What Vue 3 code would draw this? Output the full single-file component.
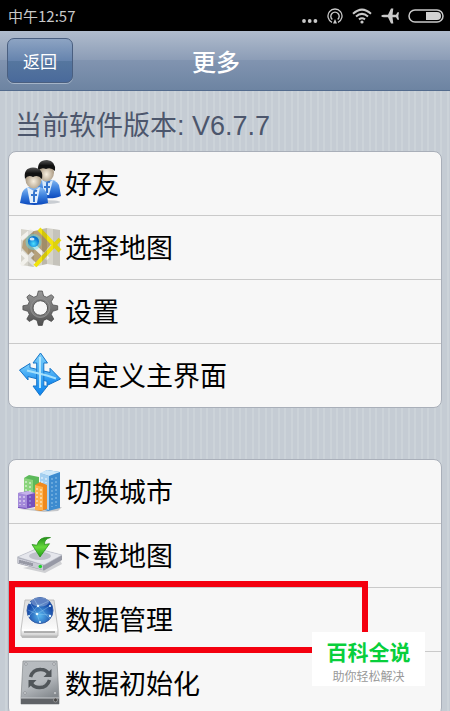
<template>
  <div class="screen">
    <div class="status-bar">
      <span>中午12:57</span>
      <div class="status-icons">
        <svg width="16" height="16" viewBox="0 0 16 16" fill="#c9c9c9">
          <circle cx="2" cy="13" r="1.900" />
          <circle cx="7.700" cy="13" r="1.900" />
          <circle cx="13.400" cy="13" r="1.900" />
        </svg>
        <svg width="16" height="16" viewBox="0 0 16 16" fill="none" stroke="#c9c9c9">
          <path d="M5 14.300A7 7 0 1 1 11 14.300" stroke-width="1.300" />
          <path d="M5.300 11.500A4.200 4.200 0 1 1 10.700 11.500" stroke-width="1.400" />
          <path d="M8 11l2 4.500H6z" fill="#c9c9c9" stroke="none" />
        </svg>
        <svg width="20" height="16" viewBox="0 0 20 16" fill="none" stroke="#c9c9c9" stroke-width="2">
          <path d="M1 5.800Q10-2.600 19 5.800" />
          <path d="M4 8.600Q10 3.200 16 8.600" />
          <path d="M7 11.400Q10 9 13 11.400" />
          <circle cx="10" cy="14" r="1.600" fill="#c9c9c9" stroke="none" />
        </svg>
        <svg width="18" height="16" viewBox="0 0 18 16" fill="#c9c9c9">
          <path d="M0 8Q1 6.700 3 6.700H7L10 .5h2.300L11.500 6.700h3.500l1.500-2.500H18L17.300 8l.7 3.800h-1.500L15 9.300h-3.500l.8 6.200H10L7 9.300H3Q1 9.300 0 8z" />
        </svg>
        <svg width="36" height="16" viewBox="0 0 36 16">
          <rect x="1" y="2" width="34" height="12" rx="6" fill="#000" stroke="#c9c9c9" stroke-width="1.500" />
          <path d="M18 4h11a4 4 0 0 1 0 8H18z" fill="#d2d2d2" />
        </svg>
      </div>
    </div>

    <header class="nav-bar">
      <button type="button" class="back-btn">返回</button>
      <h1 class="nav-title">更多</h1>
      <span></span>
    </header>

    <main class="content">
      <p class="version">当前软件版本: V6.7.7</p>

      <ul v-for="(group, index) in groups" :key="index" class="card">
        <li v-for="item in group" :key="item.icon" class="card-item">
          <button type="button" class="row">
            <svg class="row-icon" viewBox="0 0 44 48" aria-hidden="true">
              <g v-if="item.icon === 'friends'">
                <ellipse cx="24" cy="42" rx="18" ry="2" fill="#c9cdd2" />
                <path d="M19 37V26Q21 20 28 19Q38 19 41 25L43 36Q35 40 19 37z" fill="url(#suit)" />
                <path d="M24 20l5 3 6-3-4 15h-5z" fill="#d8e9fa" />
                <path d="M32 22q-3-1-3 2v9M26 27h6" class="badge-mark" />
                <ellipse cx="28.500" cy="12.500" rx="7.500" ry="9" fill="url(#skin)" />
                <path d="M20 11Q19 0 29 0Q38 1 37 11Q33 7 28 9Q23 7 20 11z" fill="url(#hair)" />
                <path d="M2 43L4 33Q6 28 11 27H21Q27 28 29 34L30 43Q17 47 2 43z" fill="url(#suit)" />
                <path d="M9 27l7 4 6-4-3 16h-7z" fill="#e3effb" />
                <path d="M19 31q-3-1-3 2v9M13 35h6" class="badge-mark" />
                <ellipse cx="15.500" cy="19.500" rx="8" ry="9" fill="url(#skin)" />
                <path d="M7 19Q5 8 15 7.500Q26 8 24 19Q20 14 15 17Q10 14 7 19z" fill="url(#hair)" />
              </g>

              <g v-else-if="item.icon === 'map'">
                <path d="M3 5l13 2 13-3 13 2v36l-13-2-13 3-13-2z" fill="#d6d4cb" />
                <path d="M5 17L16 7l7-1 10 14-15 19L4 24z" fill="#b5a07b" />
                <path d="M3 15L14 6M3 28l15 14M3 41l12-12M13 19l17 16" stroke="#f2f1ec" stroke-width="4" />
                <path d="M21 5L42 27M17 42L42 15" stroke="#f1e30c" stroke-width="4" />
                <path d="M16 7v36l-6-1V6zM42 6v36l-7-1V5z" fill="#000" opacity=".08" />
                <path d="M29 4v36l-5 1V5z" fill="#473815" opacity=".18" />
                <circle cx="15.500" cy="18" r="8" fill="#5bdcf5" opacity=".45" />
                <circle cx="15.500" cy="17.500" r="5.500" fill="url(#marker)" />
                <ellipse cx="14" cy="15" rx="2.500" ry="1.500" fill="#fff" opacity=".8" />
              </g>

              <g v-else-if="item.icon === 'settings'" stroke="#444" stroke-width=".7">
                <path
                  d="M20.300 3h4l1.300 5 3.200 1.200 4.600-2.500 2.400 2.400-2.500 4.600 1.400 3.200 5 .9v4l-5 1.500-1.400 3.200 2.500 4.600-2.400 2.400-4.600-2.500-3.200 1.400-1.300 5h-4l-1.300-5-3.200-1.400-4.600 2.500-2.400-2.400 2.500-4.600-1.400-3.200-5-1.500v-4l5-.9 1.400-3.200-2.500-4.600 2.400-2.400 4.600 2.500 3.200-1.200z"
                  fill="url(#steel)"
                />
                <circle cx="22.300" cy="20" r="9.500" fill="#7d7d7d" stroke="#999" />
                <circle cx="22.300" cy="20" r="7.300" fill="#f7f7f7" stroke="#555" stroke-width="1" />
              </g>

              <g v-else-if="item.icon === 'arrows'" stroke="#1675c9" stroke-linejoin="round">
                <path d="M1.500 18L12 11.500v4.200l20 4.800v-4.200L42.500 27 29 33.500v-4.200L10 24.600V28z" fill="url(#azure)" />
                <path d="M22.500 1L29.500 11H25.800V34H29.500L22 43.500 15 34h3.700V11H15z" fill="url(#azure)" />
                <path d="M9 18.500L29 23.500l9 3" fill="none" stroke="#a5e0fc" stroke-width="2" />
                <path d="M22 5v31" stroke="#b3e6fd" stroke-width="2" />
              </g>

              <g v-else-if="item.icon === 'city'">
                <path d="M2 41l42-2-4 4-14 1z" fill="#c4c6c9" />
                <path d="M6 10l5-3 10 2v30H6z" fill="#5cb95a" />
                <path d="M6 10l9 2v26H6z" fill="#8bd47c" />
                <path d="M22 6l7-4 13 2v36l-12 3-8-3z" fill="#3d8bcf" />
                <path d="M22 5l9 3v34l-9-2z" fill="#a4d0f1" />
                <path d="M22 5l7-3 13 2-11 4z" fill="#d0e9fa" />
                <path d="M0 25l10-2 7 2v14l-10 2-7-1z" fill="#7652bc" />
                <path d="M0 25l9 1v14l-9-1z" fill="#a48ada" />
                <path d="M0 25l10-2 7 2-8 2z" fill="#c4b2ea" />
                <path d="M17 17l5-3 7 3v24l-6 2-6-1z" fill="#f08a1e" />
                <path d="M17 17l8 2v23h-8z" fill="#ffb34d" />
                <path d="M8 13v12M12 14v10M2 28v9M6 28v9M19 20v20M23 21v19M24 9v6M28 10v5" stroke="#fff" stroke-width="1.500" stroke-dasharray="2 2" opacity=".6" />
                <path d="M34 10v29M38 9v29M12 28v10" stroke="#b8dcf5" stroke-dasharray="2 2" opacity=".7" />
              </g>

              <g v-else-if="item.icon === 'download'">
                <path d="M5 36l22 5 17-9-2-4z" fill="#cfd0d3" />
                <path d="M-.5 25L19 16.500 44 23v5L26 38.500-.5 31.500z" fill="#9799a5" />
                <path d="M-.5 25L19 16.500 44 23 26 33z" fill="#e5e6ec" stroke="#babdc7" stroke-width=".6" />
                <path d="M0 26l25 7v5L0 31z" fill="#c9cad4" />
                <path d="M2 28v3M4 28.500v3M6 29v3M8 29.500v3M10 30v3M12 30.500v3M14 31v3" stroke="#676977" />
                <ellipse cx="22" cy="24" rx="11" ry="4" fill="#bec0ca" />
                <path d="M22 25L14 12.500l5 .7Q21 4 32.500 5.500 26 7 26.500 12.500l5-.8z" fill="url(#leaf)" stroke="#218b14" stroke-width=".7" />
                <circle cx="22.300" cy="34.500" r="1.800" fill="#1ed52a" />
              </g>

              <g v-else-if="item.icon === 'globe'">
                <path d="M3 39h37l-1 3H4z" fill="#bbb" />
                <path d="M7 4h29l4 30v6H3v-6z" fill="url(#drive)" stroke="#b6b6b6" stroke-width=".8" />
                <path d="M4 34h35" stroke="#fff" stroke-width="2" />
                <path d="M6 36h31" stroke="#777" />
                <circle cx="22" cy="14.500" r="13" fill="url(#ocean)" stroke="#335da7" />
                <path d="M10 14l9 4 13-8M12 7l7 11 3 9M16 3l4 7 12 13M31 5L20 10 11 20M19 18l13 1" fill="none" stroke="#a4dafa" stroke-width=".5" opacity=".7" />
                <g fill="#e8faff">
                  <circle cx="12" cy="7" r="1" />
                  <circle cx="20" cy="10" r="1.200" />
                  <circle cx="32" cy="10" r="1" />
                  <circle cx="19" cy="18" r="1.300" />
                  <circle cx="11" cy="20" r="1" />
                  <circle cx="32" cy="20" r="1.200" />
                  <circle cx="22" cy="26" r="1" />
                </g>
                <ellipse cx="22" cy="6" rx="9" ry="4.500" fill="#fff" opacity=".3" />
              </g>

              <g v-else>
                <path d="M5 1h34l2 37v6H3v-6z" fill="url(#disk)" stroke="#85898d" stroke-width=".7" />
                <path d="M3 38h38v6H3z" fill="#606367" />
                <path d="M3 38h38" stroke="#c8cbce" />
                <g fill="none" stroke="#51565a" stroke-width="3.500">
                  <path d="M12.500 17Q15 9 23 9.500q5 0 7.500 4" />
                  <path d="M31.500 20Q29 28 21 27.500q-5 0-7.500-4" />
                </g>
                <path d="M33.500 9v8h-8zM10.500 28v-8h8z" fill="#51565a" />
                <g fill="#e4e6e8" stroke="#777b80" stroke-width=".6">
                  <circle cx="8" cy="4" r="1.300" />
                  <circle cx="36" cy="4" r="1.300" />
                  <circle cx="7" cy="33" r="1.300" />
                  <circle cx="37" cy="33" r="1.300" />
                </g>
                <circle cx="37.500" cy="40" r="2" fill="#444" stroke="#aaa" stroke-width=".7" />
              </g>
            </svg>
            <span class="row-label">{{ item.label }}</span>
          </button>
          <div v-if="item.highlighted" class="highlight"></div>
        </li>
      </ul>
    </main>

    <div class="watermark">
      <strong>百科全说</strong>
      <span>助你轻松解决</span>
    </div>

    <svg class="defs" width="0" height="0" aria-hidden="true">
      <defs>
        <linearGradient id="suit" x2="0" y2="1">
          <stop offset="0" stop-color="#8abdf4" />
          <stop offset=".5" stop-color="#3a7fdd" />
          <stop offset="1" stop-color="#0a48bd" />
        </linearGradient>
        <radialGradient id="skin" cx=".5" cy=".6">
          <stop offset="0" stop-color="#f8efdf" />
          <stop offset="1" stop-color="#ab9b84" />
        </radialGradient>
        <linearGradient id="hair" x2="0" y2="1">
          <stop offset="0" stop-color="#555" />
          <stop offset=".5" stop-color="#111" />
        </linearGradient>
        <radialGradient id="marker" cx=".5" cy=".7">
          <stop offset="0" stop-color="#4ee1ff" />
          <stop offset="1" stop-color="#0877d2" />
        </radialGradient>
        <linearGradient id="steel" x2="0" y2="1">
          <stop offset="0" stop-color="#9a9a9a" />
          <stop offset="1" stop-color="#505050" />
        </linearGradient>
        <linearGradient id="azure" x2="0" y2="1">
          <stop offset="0" stop-color="#7ed1fb" />
          <stop offset="1" stop-color="#0b83ee" />
        </linearGradient>
        <linearGradient id="leaf" x2="0" y2="1">
          <stop offset="0" stop-color="#238f19" />
          <stop offset=".5" stop-color="#67d93d" />
          <stop offset="1" stop-color="#23a118" />
        </linearGradient>
        <linearGradient id="drive" x2="0" y2="1">
          <stop offset="0" stop-color="#dcdcdc" />
          <stop offset=".8" stop-color="#fbfbfb" />
          <stop offset="1" stop-color="#cfcfcf" />
        </linearGradient>
        <radialGradient id="ocean" cx=".5" cy=".7">
          <stop offset="0" stop-color="#58b6ef" />
          <stop offset="1" stop-color="#174ba9" />
        </radialGradient>
        <linearGradient id="disk" x2=".4" y2="1">
          <stop offset="0" stop-color="#b8bcc0" />
          <stop offset=".6" stop-color="#b5b9bd" />
          <stop offset="1" stop-color="#84898e" />
        </linearGradient>
      </defs>
    </svg>
  </div>
</template>

<script setup>
import { ref } from "vue";

const groups = ref([
  [
    { icon: "friends", label: "好友" },
    { icon: "map", label: "选择地图" },
    { icon: "settings", label: "设置" },
    { icon: "arrows", label: "自定义主界面" },
  ],
  [
    { icon: "city", label: "切换城市" },
    { icon: "download", label: "下载地图" },
    { icon: "globe", label: "数据管理", highlighted: true },
    { icon: "reset", label: "数据初始化" },
  ],
]);
</script>

<style>
body {
  margin: 0;
}
</style>

<style scoped>
.screen {
  position: relative;
  display: flex;
  flex-direction: column;
  height: 100vh;
  overflow: hidden;
  font-family: "Liberation Sans", "Noto Sans CJK SC", sans-serif;
  background: repeating-linear-gradient(
    90deg,
    #c5ccd4 0 5px,
    #ccd3d9 5px 7px,
    #c5ccd4 7px 11px,
    #ccd3d9 11px 13px
  );
}

/* --- Barre d'état --- */
.status-bar {
  flex: none;
  display: flex;
  align-items: center;
  justify-content: space-between;
  height: 31px;
  padding: 0 6px 0 8px;
  background: #000;
  color: #c9c9c9;
  font-family: "Noto Sans CJK SC", sans-serif;
  font-size: 15px;
}

.status-icons {
  display: flex;
  align-items: center;
  gap: 9px;
}

/* --- Barre de navigation --- */
.nav-bar {
  flex: none;
  box-sizing: border-box;
  display: grid;
  grid-template-columns: 1fr auto 1fr;
  align-items: center;
  height: 60px;
  padding: 0 25px 0 7px;
  border-bottom: 1px solid #536b8d;
  background: linear-gradient(#b0bccd, #8b9cb6 50%, #8194b0 50%, #6d84a2);
}

.back-btn {
  justify-self: start;
  width: 66px;
  height: 45px;
  padding: 0;
  border: 1px solid #4a5f80;
  border-radius: 7px;
  background: linear-gradient(#8da4c3, #6684ae 50%, #56779f 50%, #4a6a9b);
  box-shadow: 0 1px 0 #a5b4c8;
  color: #fff;
  font-family: "Noto Sans CJK SC", sans-serif;
  font-size: 17px;
}

.nav-title {
  margin: 0;
  color: #fff;
  font-family: "Noto Sans CJK SC", sans-serif;
  font-size: 24px;
  font-weight: 500;
  line-height: 36px;
}

/* --- Contenu --- */
.content {
  flex: 1;
  min-height: 0;
  padding: 0 8px;
  overflow-y: auto;
  scrollbar-width: none;
}

.version {
  margin: 0;
  padding: 15px 7px 5px;
  color: #4c566c;
  font-size: 27px;
  line-height: 40px;
}

.card {
  margin: 0 0 51px;
  padding: 0;
  list-style: none;
  border: 1px solid #a9afb9;
  border-radius: 8px;
  background: #f7f7f7;
}

.card-item {
  position: relative;
}

.card-item + .card-item {
  border-top: 1px solid #cacaca;
}

.row {
  display: flex;
  align-items: center;
  gap: 3px;
  width: 100%;
  height: 63px;
  padding: 0 9px;
  border: none;
  background: none;
  color: #000;
  font-family: "Noto Sans CJK SC", sans-serif;
  font-size: 27px;
  text-align: left;
}

.row-icon {
  flex: none;
  width: 44px;
  height: 48px;
  overflow: visible;
}

.row-label {
  padding-bottom: 2px;
}

.badge-mark {
  fill: none;
  stroke: #3475ce;
  stroke-width: 2;
}

.highlight {
  position: absolute;
  z-index: 1;
  top: -7px;
  bottom: -2px;
  left: 0;
  box-sizing: border-box;
  width: 83%;
  border: 6px solid #f4000f;
  pointer-events: none;
}

.watermark {
  position: absolute;
  z-index: 2;
  right: 25px;
  bottom: 25px;
  box-sizing: border-box;
  display: flex;
  flex-direction: column;
  align-items: center;
  width: 113px;
  padding: 4px 0 2px;
  background: #fff;
  font-family: "Noto Sans CJK SC", sans-serif;
}

.watermark strong {
  color: #08cf3c;
  font-size: 21px;
  line-height: 31px;
}

.watermark span {
  color: #999;
  font-size: 12px;
  line-height: 17px;
}

.defs {
  position: absolute;
}
</style>
